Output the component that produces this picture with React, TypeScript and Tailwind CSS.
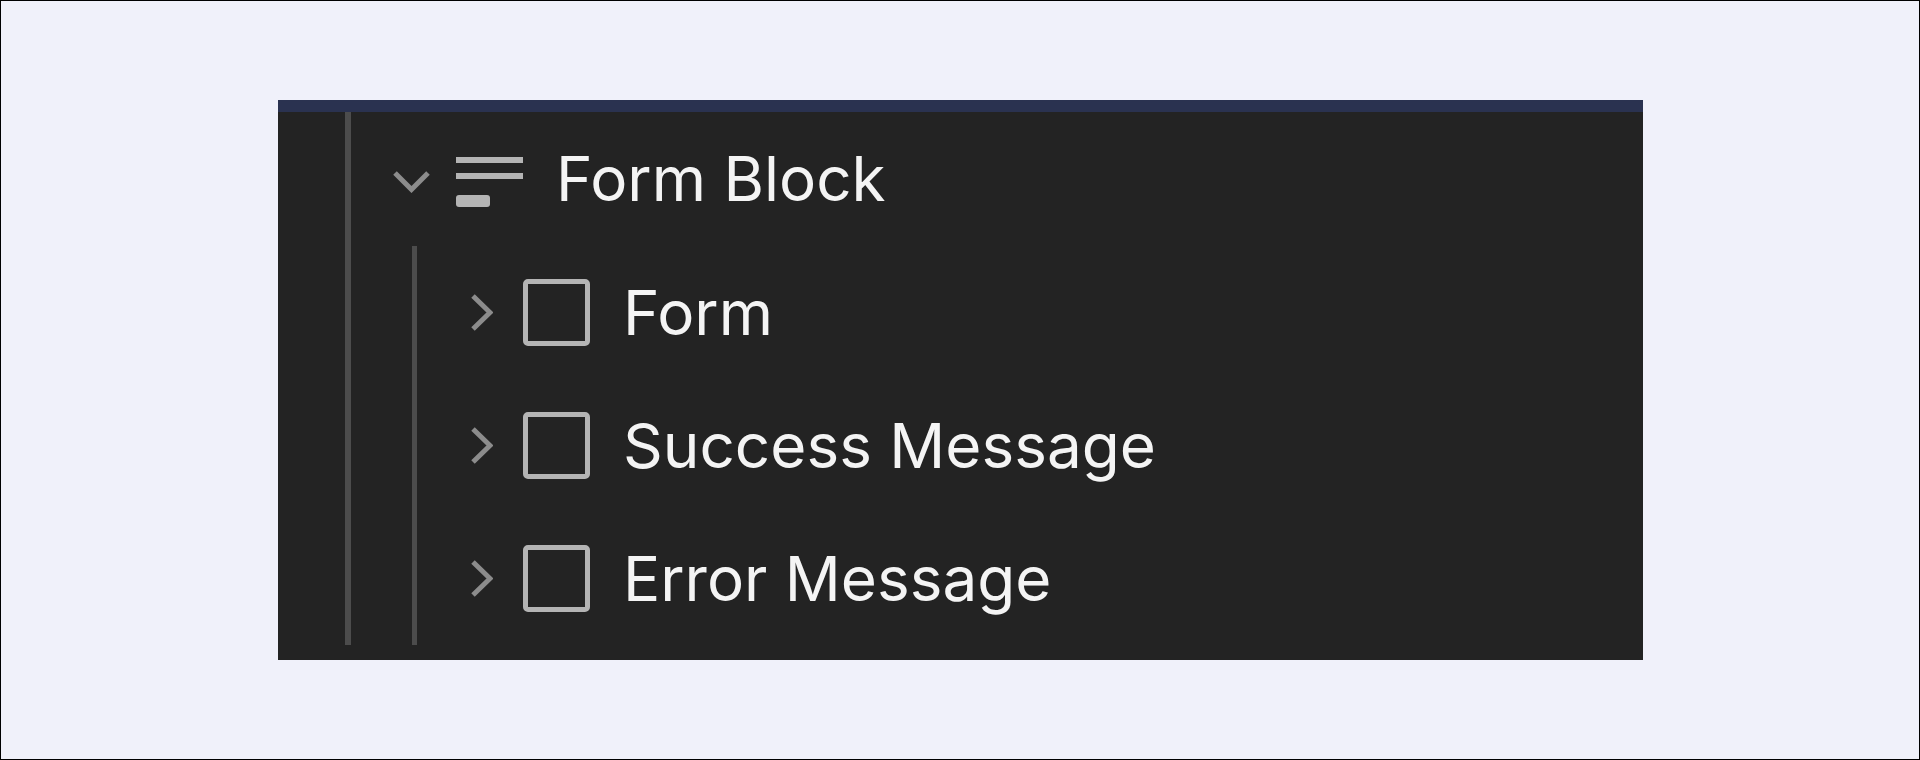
const inter = "font-['Inter',sans-serif] font-normal text-[#f4f4f4] whitespace-nowrap tracking-normal";

function ChevronDown() {
  return (
    <svg width="37" height="22" viewBox="0 0 37 22" className="mt-[6px] shrink-0" fill="none">
      <path d="M2 2 L18.5 18.5 L35 2" stroke="#8c8c8c" strokeWidth="5" />
    </svg>
  );
}

function ChevronRight() {
  return (
    <svg width="22" height="37" viewBox="0 0 22 37" className="shrink-0" fill="none">
      <path d="M2 2 L19 18.5 L2 35" stroke="#8c8c8c" strokeWidth="5" />
    </svg>
  );
}

function BlockIcon() {
  return (
    <svg width="67" height="52" viewBox="0 0 67 52" className="shrink-0">
      <rect x="0" y="0" width="67" height="6" fill="#b4b4b4" />
      <rect x="0" y="16" width="67" height="6" fill="#b4b4b4" />
      <rect x="0" y="38" width="34" height="12" rx="3" fill="#b4b4b4" />
    </svg>
  );
}

function Child({ label }: { label: string }) {
  return (
    <div className="flex h-[133px] items-center pl-[54px]">
      <ChevronRight />
      <div className="ml-[30px] h-[67px] w-[67px] shrink-0 rounded-[5px] border-[5px] border-[#b4b4b4]" />
      <span className={`ml-[33px] text-[62px] leading-none ${inter}`}>{label}</span>
    </div>
  );
}

export default function App() {
  return (
    <div className="h-[760px] w-full border border-black bg-[#f0f1fa] pl-[277px] pt-[99px]">
      <div className="h-[560px] w-[1365px] bg-[#232323]">
        <div className="h-3 bg-[#2a3250]" />
        <div className="pl-[67px]">
          <div className="border-l-[6px] border-[#4c4c4c]">
            <div className="flex h-[134px] items-center pl-[42px]">
              <ChevronDown />
              <div className="ml-[26px] mt-[8px]">
                <BlockIcon />
              </div>
              <span className={`ml-[33px] text-[62px] leading-none ${inter}`}>Form Block</span>
            </div>
            <div className="ml-[61px] border-l-[5px] border-[#4c4c4c]">
              <Child label="Form" />
              <Child label="Success Message" />
              <Child label="Error Message" />
            </div>
          </div>
        </div>
      </div>
    </div>
  );
}
